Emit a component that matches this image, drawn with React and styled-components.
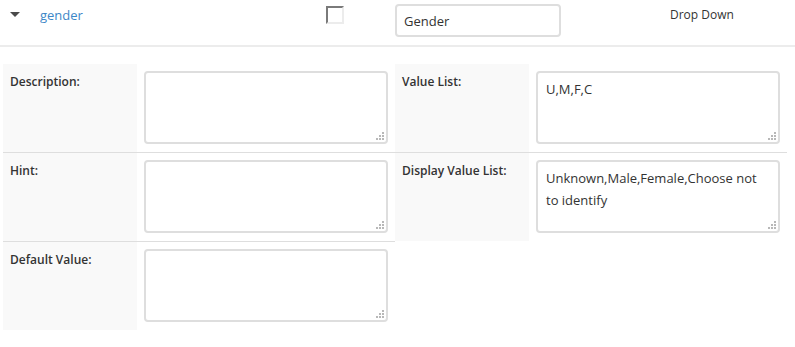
import React from "react";
import styled, { createGlobalStyle } from "styled-components";

const Global = createGlobalStyle`
  html, body { margin: 0; padding: 0; background: #fff; }
  body { font-family: "Open Sans", "Liberation Sans", sans-serif; color: #333; }
  * { box-sizing: border-box; }
`;

const Page = styled.div`
  width: 795px;
  height: 347px;
  overflow: hidden;
`;

const Header = styled.div`
  display: grid;
  grid-template-columns: 40px 286px 69px 275px 1fr;
  align-items: start;
  height: 47px;
  border-bottom: 2px solid #ececec;
`;

const Caret = styled.span`
  display: block;
  width: 0;
  height: 0;
  margin: 12px 0 0 10px;
  border-left: 5px solid transparent;
  border-right: 5px solid transparent;
  border-top: 5px solid #4a4a4a;
`;

const FieldName = styled.a`
  display: block;
  margin-top: 6px;
  font-size: 13px;
  line-height: 18px;
  color: #3d87c7;
  text-decoration: none;
`;

const Check = styled.input.attrs({ type: "checkbox" })`
  appearance: none;
  display: block;
  margin: 6px 0 0 0;
  width: 18px;
  height: 18px;
  border-style: solid;
  border-width: 2px;
  border-color: #7a7a7a #ececec #ececec #7a7a7a;
  background: #fff;
`;

const LabelInput = styled.input`
  display: block;
  margin-top: 4px;
  width: 166px;
  height: 33px;
  padding: 0 7px;
  border: 2px solid #dedede;
  border-radius: 4px;
  font-family: inherit;
  font-size: 13px;
  color: #333;
  outline: none;
`;

const TypeText = styled.span`
  display: block;
  margin-top: 6px;
  font-size: 12px;
  line-height: 17px;
  color: #333;
`;

const Details = styled.div`
  display: flex;
  align-items: flex-start;
  margin-top: 17px;
  padding-left: 3px;
`;

const Column = styled.div`
  width: 392px;
  display: flex;
  flex-direction: column;
`;

const Row = styled.div`
  display: grid;
  grid-template-columns: 134px 1fr;
  height: 89px;
  border-bottom: 1px solid #dedede;
  &:last-child {
    height: 88px;
    border-bottom: none;
  }
`;

const Label = styled.div`
  background: #f9f9f9;
  padding: 9px 7px 7px;
  font-size: 12px;
  line-height: 17px;
  font-weight: 600;
  color: #333;
`;

const Cell = styled.div`
  padding: 7px 7px 8px;
`;

const AreaWrap = styled.div`
  position: relative;
  width: 244px;
  height: 73px;
`;

const Area = styled.textarea`
  display: block;
  width: 100%;
  height: 100%;
  padding: 5px 8px;
  border: 2px solid #dedede;
  border-radius: 4px;
  font-family: inherit;
  font-size: 13px;
  line-height: 22px;
  color: #333;
  resize: none;
  outline: none;
  overflow: hidden;
`;

const Grip = styled.svg`
  position: absolute;
  right: 4px;
  bottom: 4px;
  width: 8px;
  height: 8px;
  pointer-events: none;
`;

function ResizeGrip() {
  const dots = [
    [6, 0],
    [3, 3],
    [6, 3],
    [0, 6],
    [3, 6],
    [6, 6],
  ];
  return (
    <Grip viewBox="0 0 8 8">
      {dots.map(([x, y]) => (
        <rect key={`${x}-${y}`} x={x} y={y} width="2" height="2" fill="#b8b8b8" />
      ))}
    </Grip>
  );
}

const left = [
  { label: "Description:", value: "" },
  { label: "Hint:", value: "" },
  { label: "Default Value:", value: "" },
];
const right = [
  { label: "Value List:", value: "U,M,F,C" },
  { label: "Display Value List:", value: "Unknown,Male,Female,Choose not to identify" },
];

function FieldColumn({ rows }) {
  return (
    <Column>
      {rows.map((r) => (
        <Row key={r.label}>
          <Label>{r.label}</Label>
          <Cell>
            <AreaWrap>
              <Area defaultValue={r.value} />
              <ResizeGrip />
            </AreaWrap>
          </Cell>
        </Row>
      ))}
    </Column>
  );
}

export default function App() {
  return (
    <Page>
      <Global />
      <Header>
        <Caret />
        <FieldName href="#">gender</FieldName>
        <Check />
        <LabelInput defaultValue="Gender" />
        <TypeText>Drop Down</TypeText>
      </Header>
      <Details>
        <FieldColumn rows={left} />
        <FieldColumn rows={right} />
      </Details>
    </Page>
  );
}
